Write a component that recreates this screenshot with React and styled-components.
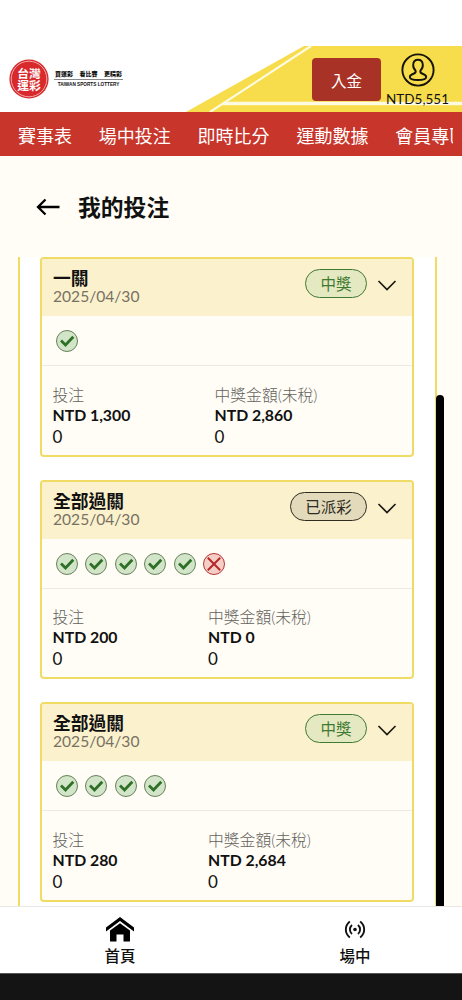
import styled, { createGlobalStyle } from 'styled-components';

const GlobalStyle = createGlobalStyle`
  * {
    box-sizing: border-box;
  }
  body {
    margin: 0;
    background: #fffdf5;
    color: #111;
    font-family: Lato, "Noto Sans CJK TC", sans-serif;
  }
  p {
    margin: 0;
  }
`;

const Page = styled.div`
  width: 462px;
  height: 1000px;
  display: flex;
  flex-direction: column;
  overflow: hidden;
`;

const Header = styled.header`
  position: relative;
  height: 112px;
  flex: none;
  padding: 46px 13px 0 9px;
  display: flex;
  justify-content: space-between;
  background: #fff;
`;

const HeaderArt = styled.svg`
  position: absolute;
  left: 180px;
  top: 46px;
`;

const Brand = styled.div`
  display: flex;
  align-items: center;
  gap: 5px;
  height: 66px;
`;

const Slogan = styled.div`
  width: 69px;
  margin-top: -2px;
  text-align: center;
`;

const SloganTitle = styled.p`
  display: flex;
  justify-content: space-between;
  padding: 0 1px 1px;
  border-bottom: 1px solid #888;
  font-size: 6px;
  line-height: 9px;
  font-weight: 900;
`;

const SloganSub = styled.p`
  margin-top: 1px;
  font: bold 4.7px/7px "Liberation Sans", sans-serif;
  white-space: nowrap;
`;

const Account = styled.div`
  position: relative;
  display: flex;
  gap: 5px;
`;

const DepositButton = styled.button`
  width: 69px;
  height: 43px;
  margin-top: 12px;
  padding: 0;
  border: none;
  border-radius: 4px;
  background: #a93226;
  color: #fff;
  font: 15.5px Lato, "Noto Sans CJK TC", sans-serif;
`;

const Balance = styled.div`
  width: 63px;
  padding-top: 7px;
  display: flex;
  flex-direction: column;
  align-items: center;
  font-size: 13.5px;
  line-height: 18px;
  white-space: nowrap;

  svg {
    flex: none;
    margin-bottom: 3px;
  }
`;

const Nav = styled.nav`
  height: 44px;
  flex: none;
  background: #c8352b;
  padding-left: 18px;
`;

const NavList = styled.div`
  width: 435px;
  height: 45px;
  display: flex;
  align-items: center;
  gap: 26.8px;
  overflow: hidden;
  color: #fff;
  font-size: 18px;
  font-weight: 400;
  white-space: nowrap;
`;

const NavItem = styled.span`
  flex: none;
`;

const TitleRow = styled.div`
  height: 101px;
  flex: none;
  padding: 0 0 0 36px;
  display: flex;
  align-items: center;
  gap: 18px;
`;

const Title = styled.h1`
  margin: 0;
  font-size: 22.8px;
  line-height: 30px;
  font-weight: 700;
`;

const Content = styled.main`
  position: relative;
  flex: 1;
  min-height: 0;
  padding: 0 25px 0 18px;
  overflow: hidden;
`;

const Panel = styled.div`
  height: 100%;
  padding: 0 21px 0 20px;
  display: flex;
  flex-direction: column;
  gap: 23px;
  background: #fff;
  border: solid #f0db64;
  border-width: 0 2px;
`;

const ScrollThumb = styled.div`
  position: absolute;
  left: 436px;
  top: 138px;
  bottom: 0;
  width: 8px;
  border-radius: 4px 4px 0 0;
  background: #000;
`;

const Card = styled.article`
  height: 199.5px;
  flex: none;
  border: 2px solid #f0db64;
  border-radius: 4px;
  background: #fffdf5;
  overflow: hidden;
`;

const CardHead = styled.div`
  height: 57px;
  padding: 0 15px 0 11px;
  display: flex;
  justify-content: space-between;
  background: #fcf1cd;
`;

const CardTitle = styled.p`
  padding-top: 9px;
  font-size: 17.8px;
  line-height: 20px;
  font-weight: 700;
`;

const CardDate = styled.p`
  color: #777164;
  font-size: 15.6px;
  line-height: 17px;
`;

const CardState = styled.div`
  height: 29px;
  margin-top: 10px;
  display: flex;
  align-items: center;
  gap: 10px;

  svg {
    margin-top: 3px;
  }
`;

const states = {
  win: { width: 62, color: '#3f7a32', bg: '#e5e9c1' },
  paid: { width: 77, color: '#302c22', bg: '#e2dabb' },
};

const Badge = styled.span`
  width: ${({ $state }) => states[$state].width}px;
  height: 29px;
  border: 1px solid ${({ $state }) => states[$state].color};
  border-radius: 15px;
  background: ${({ $state }) => states[$state].bg};
  color: ${({ $state }) => states[$state].color};
  font-size: 15.5px;
  line-height: 28px;
  text-align: center;
`;

const Marks = styled.div`
  height: 50px;
  padding: 1px 0 0 13px;
  display: flex;
  align-items: center;
  gap: 5.4px;
  border-bottom: 1px solid #eceae2;
`;

const Amounts = styled.div`
  padding: 17.5px 0 0 10.5px;
  display: flex;
`;

const Amount = styled.div`
  width: ${({ $width }) => $width || 150}px;
  font-size: 15.8px;
  line-height: 21px;
`;

const Label = styled.p`
  height: 20px;
  color: #62615d;
  font-size: 15.8px;
  font-weight: 300;
`;

const Money = styled.p`
  font-weight: 700;
  height: 22px;
`;

const Count = styled.p`
  font-size: 17px;
  line-height: 22px;
`;

const TabBar = styled.footer`
  height: 67px;
  flex: none;
  display: flex;
  background: #fff;
  border-top: 1px solid #e6e8e4;
`;

const Tab = styled.div`
  width: ${({ $width }) => $width}px;
  flex: none;
  padding-top: 9px;
  display: flex;
  flex-direction: column;
  align-items: center;
  font-size: 15.5px;
  line-height: 28px;
  font-weight: 500;
`;

const SystemBar = styled.div`
  height: 27px;
  flex: none;
  background: #141414;
  border-top: 1px solid #555;
`;

const SealText = styled.text`
  font: 700 11.8px "Noto Sans CJK TC", sans-serif;
  fill: #fff;
`;

function Seal() {
  return (
    <svg width="40" height="40" viewBox="0 0 40 40">
      <circle cx="20" cy="20" r="19.6" fill="#d8292d" />
      <circle cx="20" cy="20" r="17.8" fill="none" stroke="#f7c9c5" strokeWidth="0.8" />
      <SealText x="8.2" y="19">台灣</SealText>
      <SealText x="8.2" y="31">運彩</SealText>
    </svg>
  );
}

function Mark({ ok }) {
  return (
    <svg width="24" height="24" viewBox="0 0 24 24" fill="none">
      <circle cx="12" cy="12" r="10.5" fill={ok ? '#d3e5c8' : '#f5cfc6'} stroke={ok ? '#66805c' : '#b53431'} />
      {ok ? (
        <path d="M6 11.5l4.5 4.5 7.8-8.3" stroke="#2f7028" strokeWidth="2.8" />
      ) : (
        <path d="M5.800 5.800l12.400 12.400M18.200 5.800L5.800 18.200" stroke="#b3292b" strokeWidth="2" />
      )}
    </svg>
  );
}

const navItems = ['賽事表', '場中投注', '即時比分', '運動數據', '會員專區'];

const bets = [
  { title: '一關', state: 'win', label: '中獎', marks: [1], bet: '1,300', prize: '2,860', width: 162 },
  { title: '全部過關', state: 'paid', label: '已派彩', marks: [1, 1, 1, 1, 1, 0], bet: '200', prize: '0', width: 155.5 },
  { title: '全部過關', state: 'win', label: '中獎', marks: [1, 1, 1, 1], bet: '280', prize: '2,684', width: 155.5 },
];

function BetCard({ bet }) {
  return (
    <Card>
      <CardHead>
        <div>
          <CardTitle>{bet.title}</CardTitle>
          <CardDate>2025/04/30</CardDate>
        </div>
        <CardState>
          <Badge $state={bet.state}>{bet.label}</Badge>
          <svg width="20" height="12" viewBox="0 0 20 12" fill="none" stroke="#1c1a14" strokeWidth="1.7">
            <path d="M1.5 2l8.5 8.5L18.5 2" />
          </svg>
        </CardState>
      </CardHead>
      <Marks>
        {bet.marks.map((ok, i) => (
          <Mark key={i} ok={ok} />
        ))}
      </Marks>
      <Amounts>
        <Amount $width={bet.width}>
          <Label>投注</Label>
          <Money>NTD {bet.bet}</Money>
          <Count>0</Count>
        </Amount>
        <Amount>
          <Label>中獎金額(未稅)</Label>
          <Money>NTD {bet.prize}</Money>
          <Count>0</Count>
        </Amount>
      </Amounts>
    </Card>
  );
}

export default function App() {
  return (
    <>
      <GlobalStyle />
      <Page>
        <Header>
          <HeaderArt width="282" height="66" viewBox="0 0 282 66">
            <path d="M6 66L124 0H282V66z" fill="#f7dc4b" />
            <path d="M30 66L131 0" stroke="#fffbe0" strokeWidth="2.2" />
            <path d="M43 57.5H282" stroke="#fffbe0" strokeWidth="3.4" />
          </HeaderArt>
          <Brand>
            <Seal />
            <Slogan>
              <SloganTitle>
                <span>買運彩</span>
                <span>看比賽</span>
                <span>更精彩</span>
              </SloganTitle>
              <SloganSub>TAIWAN SPORTS LOTTERY</SloganSub>
            </Slogan>
          </Brand>
          <Account>
            <DepositButton>入金</DepositButton>
            <Balance>
              <svg width="34" height="34" viewBox="0 0 34 34" fill="none" stroke="#16130a" strokeWidth="1.9">
                <circle cx="17" cy="17" r="15.6" />
                <path d="M14.5 17.5c-1.9-1.7-2.5-3.7-2.3-6 .2-3 2.2-4.7 4.8-4.7s4.6 1.7 4.8 4.7c.2 2.3-.4 4.3-2.3 6-.6 1.6 0 2.4 1.5 3 2.4.9 4.2 1.6 4.2 3.4 0 2-3.7 3.1-8.2 3.1s-8.2-1.1-8.2-3.1c0-1.8 1.8-2.5 4.2-3.4 1.5-.6 2.1-1.4 1.5-3z" />
              </svg>
              NTD5,551
            </Balance>
          </Account>
        </Header>
        <Nav>
          <NavList>
            {navItems.map((item) => (
              <NavItem key={item}>{item}</NavItem>
            ))}
          </NavList>
        </Nav>
        <TitleRow>
          <svg width="24" height="20" viewBox="0 0 24 20" fill="none" stroke="#000" strokeWidth="2.3">
            <path d="M23.5 10H2M9.5 2.5L2 10l7.5 7.5" />
          </svg>
          <Title>我的投注</Title>
        </TitleRow>
        <Content>
          <Panel>
            {bets.map((bet, i) => (
              <BetCard key={i} bet={bet} />
            ))}
          </Panel>
          <ScrollThumb />
        </Content>
        <TabBar>
          <Tab $width={240}>
            <svg width="28" height="26" viewBox="0 0 28 26">
              <path d="M0 11.5L14 1l14 10.5v4L14 5 0 15.5z" />
              <path d="M4 14.5L14 7.2l10 7.3V25.5h-6.5v-7h-7v7H4z" />
            </svg>
            首頁
          </Tab>
          <Tab $width={230}>
            <svg width="28" height="26" viewBox="0 0 28 26" fill="none" stroke="#111" strokeWidth="1.9">
              <circle cx="14" cy="13.5" r="1.8" fill="#111" stroke="none" />
              <path d="M8.8 5.5c-5.3 4.5-5.3 11.5 0 16M19.2 5.5c5.3 4.5 5.3 11.5 0 16M11 9c-2.8 2.5-2.8 6.5 0 9M17 9c2.8 2.5 2.8 6.5 0 9" />
            </svg>
            場中
          </Tab>
        </TabBar>
        <SystemBar />
      </Page>
    </>
  );
}
